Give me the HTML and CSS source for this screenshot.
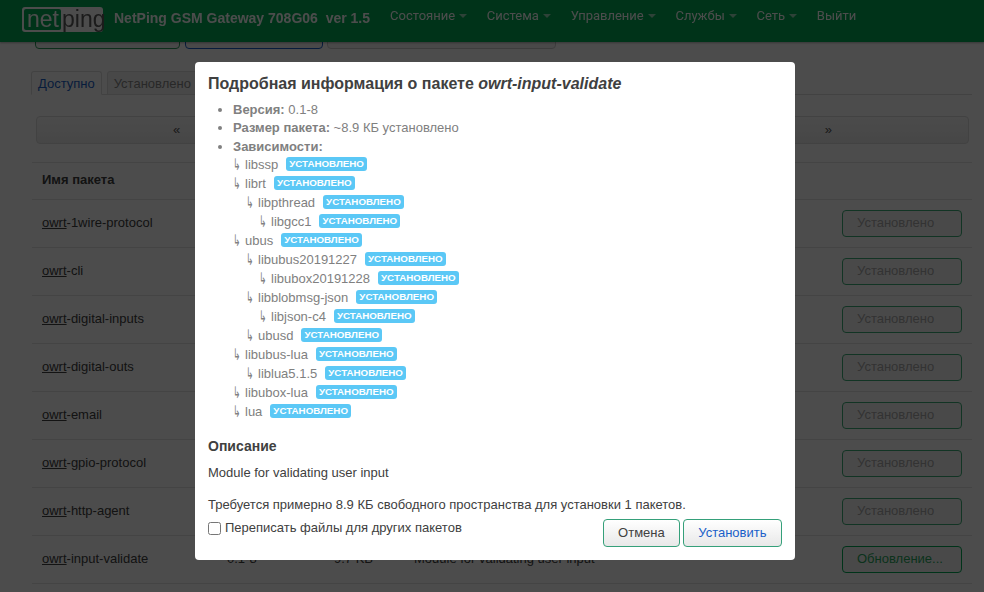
FILE: index.html
```html
<!DOCTYPE html>
<html lang="ru">
<head>
<meta charset="utf-8">
<title>NetPing GSM Gateway</title>
<link rel="stylesheet" href="styles.css">
</head>
<body>
<header class="topbar">
  <a class="logo"><span class="logo-net">net</span><span class="logo-ping">ping</span></a>
  <span class="brand">NetPing GSM Gateway 708G06&nbsp; ver 1.5</span>
  <nav class="menu">
    <a class="menu-item caret">Состояние</a>
    <a class="menu-item caret">Система</a>
    <a class="menu-item caret">Управление</a>
    <a class="menu-item caret">Службы</a>
    <a class="menu-item caret">Сеть</a>
    <a class="menu-item">Выйти</a>
  </nav>
</header>
<main class="page">
  <div class="actions">
    <button class="act act-green"></button>
    <button class="act act-blue"></button>
    <button class="act act-grey"></button>
  </div>
  <ul class="tabs">
    <li class="tab tab-active">Доступно</li>
    <li class="tab">Установлено</li>
  </ul>
  <div class="pager"><span class="pager-arrow">«</span><span class="pager-arrow">»</span></div>
  <table class="pkg-table">
    <thead>
      <tr><th class="c-name">Имя пакета</th><th class="c-ver"></th><th class="c-size"></th><th class="c-desc"></th><th class="c-act"></th></tr>
    </thead>
    <tbody>
      <tr><td><a class="pkg"><u>owrt</u>-1wire-protocol</a></td><td></td><td></td><td></td><td class="c-act"><button class="state">Установлено</button></td></tr>
      <tr><td><a class="pkg"><u>owrt</u>-cli</a></td><td></td><td></td><td></td><td class="c-act"><button class="state">Установлено</button></td></tr>
      <tr><td><a class="pkg"><u>owrt</u>-digital-inputs</a></td><td></td><td></td><td></td><td class="c-act"><button class="state">Установлено</button></td></tr>
      <tr><td><a class="pkg"><u>owrt</u>-digital-outs</a></td><td></td><td></td><td></td><td class="c-act"><button class="state">Установлено</button></td></tr>
      <tr><td><a class="pkg"><u>owrt</u>-email</a></td><td></td><td></td><td></td><td class="c-act"><button class="state">Установлено</button></td></tr>
      <tr><td><a class="pkg"><u>owrt</u>-gpio-protocol</a></td><td></td><td></td><td></td><td class="c-act"><button class="state">Установлено</button></td></tr>
      <tr><td><a class="pkg"><u>owrt</u>-http-agent</a></td><td></td><td></td><td></td><td class="c-act"><button class="state">Установлено</button></td></tr>
      <tr><td><a class="pkg"><u>owrt</u>-input-validate</a></td><td>0.1-8</td><td>9.7 KB</td><td>Module for validating user input</td><td class="c-act"><button class="state state-update">Обновление...</button></td></tr>
    </tbody>
  </table>
</main>
<div class="overlay">
  <section class="modal">
    <h4 class="modal-title">Подробная информация о пакете <em>owrt-input-validate</em></h4>
    <ul class="facts">
      <li><strong>Версия:</strong> 0.1-8</li>
      <li><strong>Размер пакета:</strong> ~8.9 КБ установлено</li>
      <li><strong>Зависимости:</strong>
        <div class="tree">
          <div class="dep"><span class="arrow">↳</span>libssp<span class="label">УСТАНОВЛЕНО</span></div>
          <div class="dep"><span class="arrow">↳</span>librt<span class="label">УСТАНОВЛЕНО</span></div>
          <div class="dep lvl1"><span class="arrow">↳</span>libpthread<span class="label">УСТАНОВЛЕНО</span></div>
          <div class="dep lvl2"><span class="arrow">↳</span>libgcc1<span class="label">УСТАНОВЛЕНО</span></div>
          <div class="dep"><span class="arrow">↳</span>ubus<span class="label">УСТАНОВЛЕНО</span></div>
          <div class="dep lvl1"><span class="arrow">↳</span>libubus20191227<span class="label">УСТАНОВЛЕНО</span></div>
          <div class="dep lvl2"><span class="arrow">↳</span>libubox20191228<span class="label">УСТАНОВЛЕНО</span></div>
          <div class="dep lvl1"><span class="arrow">↳</span>libblobmsg-json<span class="label">УСТАНОВЛЕНО</span></div>
          <div class="dep lvl2"><span class="arrow">↳</span>libjson-c4<span class="label">УСТАНОВЛЕНО</span></div>
          <div class="dep lvl1"><span class="arrow">↳</span>ubusd<span class="label">УСТАНОВЛЕНО</span></div>
          <div class="dep"><span class="arrow">↳</span>libubus-lua<span class="label">УСТАНОВЛЕНО</span></div>
          <div class="dep lvl1"><span class="arrow">↳</span>liblua5.1.5<span class="label">УСТАНОВЛЕНО</span></div>
          <div class="dep"><span class="arrow">↳</span>libubox-lua<span class="label">УСТАНОВЛЕНО</span></div>
          <div class="dep"><span class="arrow">↳</span>lua<span class="label">УСТАНОВЛЕНО</span></div>
        </div>
      </li>
    </ul>
    <h4 class="section-title">Описание</h4>
    <p class="desc">Module for validating user input</p>
    <p class="need">Требуется примерно 8.9 КБ свободного пространства для установки 1 пакетов.</p>
    <div class="modal-foot">
      <label class="overwrite"><input type="checkbox" class="check"> Переписать файлы для других пакетов</label>
      <div class="foot-buttons">
        <button class="btn">Отмена</button>
        <button class="btn btn-primary">Установить</button>
      </div>
    </div>
  </section>
</div>
</body>
</html>
```
FILE: styles.css
```css
* { box-sizing: border-box; }
html, body { margin: 0; height: 100%; overflow: hidden; }
body {
  background: #fff;
  color: #404040;
  font: 13px/18.5px "Liberation Sans", Arial, "DejaVu Sans", sans-serif;
}
.topbar {
  position: fixed;
  top: 0; left: 0; right: 0;
  z-index: 2;
  height: 42px;
  display: flex;
  align-items: center;
  padding: 0 0 3px 22px;
  background: #00ab55;
  color: #fff;
  box-shadow: 0 1px 2px rgba(0,0,0,.3);
}
.logo {
  display: flex;
  width: 81px;
  height: 25px;
  padding: 2px;
  border-radius: 3px;
  background: #fff;
  font-size: 23px;
  line-height: 20px;
  color: #00ab55;
}
.logo-net { background: #00ab55; color: #fff; padding: 0 2px 0 3px; border-radius: 2px; }
.logo-ping { padding-left: 1px; color: #5a5a5a; }
.brand { margin: 0 0 3px 11px; font-size: 14px; font-weight: 700; white-space: nowrap; color: #fff; }
.menu { display: flex; gap: 19.7px; margin: 0 0 6px 20px; }
.menu-item { font-family: Roboto, "Liberation Sans", sans-serif; font-size: 13px; color: #fff; white-space: nowrap; }
.caret::after {
  content: "";
  display: inline-block;
  margin-left: 4px;
  vertical-align: 2px;
  border: 4px solid transparent;
  border-top-color: rgba(255,255,255,.6);
  border-bottom: 0;
}
.page { padding: 0 12px 0 32px; }
.actions { display: flex; gap: 5px; padding: 21px 0 0 3px; height: 50px; }
.act { height: 28px; border-radius: 4px; background: #f6f6f6; font: inherit; }
.act-green { width: 145px; border: 1px solid #2e9a5c; }
.act-blue { width: 138px; border: 1px solid #1a5fc8; }
.act-grey { width: 229px; margin-left: -1px; border: 1px solid #ccc; }
.tabs { display: flex; gap: 5px; list-style: none; margin: 21px 0 0 -1px; padding: 0; height: 24px; border-bottom: 1px solid #ddd; }
.tab { height: 24px; padding: 3px 6px; border: 1px solid #ddd; border-radius: 3px 3px 0 0; background: #f1f1f1; color: #888; }
.tab-active { background: #fff; border-bottom-color: #fff; color: #1a5fc8; }
.pager {
  display: flex; justify-content: space-between;
  margin: 21px 3px 0 4px;
  height: 28px;
  padding: 4px 136px;
  border: 1px solid #ddd; border-radius: 4px;
  background: linear-gradient(#fbfbfb, #ececec);
  color: #555;
}
.pkg-table { width: 940px; margin-top: 18px; border-collapse: collapse; table-layout: fixed; }
.pkg-table th { height: 37px; padding: 0 10px 2px; text-align: left; border-top: 1px solid #e4e4e4; border-bottom: 1px solid #e4e4e4; }
.pkg-table td { height: 48px; padding: 0 10px; border-bottom: 1px solid #e4e4e4; color: #404040; white-space: nowrap; }
.c-name { width: 185px; }
.c-ver { width: 107px; }
.c-size { width: 80px; }
.c-desc { width: auto; }
.c-act { width: 130px; }
.pkg-table .c-act { padding: 0 10px 0 0; text-align: right; }
.pkg { color: #404040; }
.state { width: 120px; height: 27px; padding: 0 0 0 14px; text-align: left; border: 1px solid #3fae78; border-radius: 4px; background: #f6f6f6; font: inherit; color: #aaa; }
.state-update { color: #2aa860; border-color: #00ab55; }
.overlay {
  position: fixed;
  inset: 0;
  z-index: 3;
  display: flex;
  justify-content: center;
  align-items: flex-start;
  padding: 62px 0 0 6px;
  background: rgba(0,0,0,.7);
}
.modal {
  width: 600px;
  height: 498px;
  padding: 12px 13px;
  border-radius: 4px;
  background: #fff;
  color: #404040;
}
.modal-title { margin: 0; font-size: 16px; line-height: 20px; font-weight: 700; }
.facts { margin: 7px 0 0; padding: 0 0 0 25px; color: #808080; line-height: 18.3px; }
.facts strong { font-weight: 700; }
.tree { margin-top: -1px; }
.dep { display: flex; align-items: center; height: 19px; line-height: 19px; white-space: nowrap; margin-left: -1px; }
.arrow { display: inline-block; width: 13px; font-size: 16px; transform: scaleX(.55); transform-origin: 2px center; font-family: "DejaVu Sans", sans-serif; }
.lvl1 { padding-left: 13px; }
.lvl2 { padding-left: 26px; }
.label {
  display: inline-block;
  margin-left: 8px;
  padding: 0 3px;
  height: 14px;
  border-radius: 3px;
  background: #5bc8f6;
  color: #fff;
  font-size: 9.75px;
  font-weight: 700;
  line-height: 14px;
}
.section-title { margin: 15px 0 0; font-size: 14px; line-height: 20px; font-weight: 700; }
.desc { margin: 8px 0 0; }
.need { margin: 14px 0 0; }
.modal-foot { display: flex; justify-content: space-between; align-items: flex-start; }
.overwrite { display: flex; align-items: center; margin-top: 4px; }
.check { width: 13px; height: 13px; margin: 0 4px 0 0; }
.foot-buttons { display: flex; gap: 3px; margin-top: 4px; }
.btn { height: 28px; padding: 0 14px; border: 1px solid #35a07a; border-radius: 4px; background: linear-gradient(#fff, #e8e8e8); color: #404040; font: inherit; }
.btn-primary { padding: 0 14.5px; color: #1a5fc8; }
```
